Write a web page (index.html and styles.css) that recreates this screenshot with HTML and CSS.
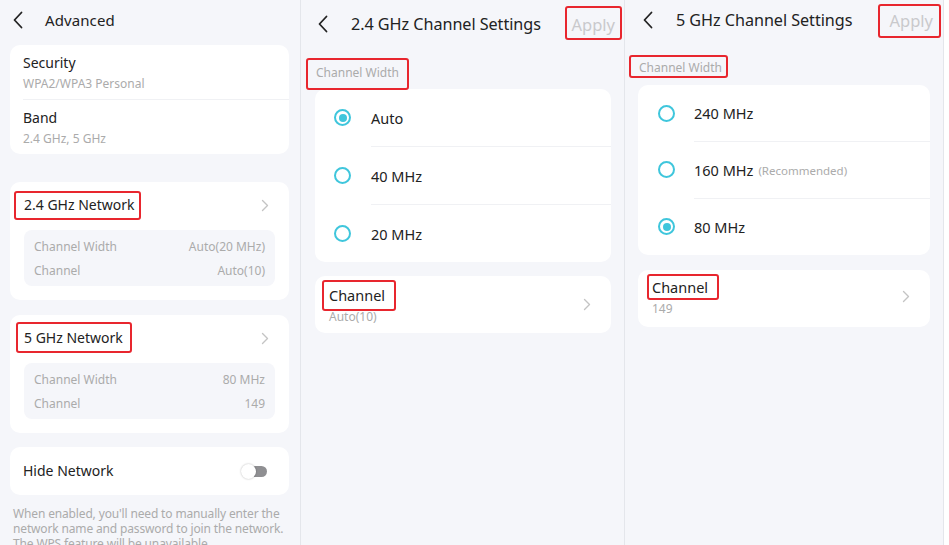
FILE: index.html
```html
<!DOCTYPE html>
<html lang="en">
<head>
    <meta charset="UTF-8">
    <meta name="viewport" content="width=device-width, initial-scale=1.0">
    <title>Channel Settings</title>
    <link rel="stylesheet" href="styles.css">
</head>
<body>
    <div class="screens">
        <!-- Advanced -->
        <div class="panel panel-advanced">
            <div class="nav">
                <svg class="back" width="12" height="18" viewBox="0 0 12 18"><path d="M9.5 1.5 L2.5 9 L9.5 16.5" fill="none" stroke="#222" stroke-width="1.8" stroke-linecap="round" stroke-linejoin="round"/></svg>
                <span class="nav-title">Advanced</span>
            </div>

            <div class="card">
                <div class="info-row">
                    <div class="row-title">Security</div>
                    <div class="row-sub">WPA2/WPA3 Personal</div>
                </div>
                <div class="info-row">
                    <div class="row-title">Band</div>
                    <div class="row-sub">2.4 GHz, 5 GHz</div>
                </div>
            </div>

            <div class="card net-card first-net">
                <div class="net-head">
                    <span class="row-title mark mark-net24">2.4 GHz Network</span>
                    <svg class="chev" width="8" height="13" viewBox="0 0 8 13"><path d="M1.5 1.5 L6.5 6.5 L1.5 11.5" fill="none" stroke="#c4c4c4" stroke-width="1.4" stroke-linecap="round" stroke-linejoin="round"/></svg>
                </div>
                <div class="net-box">
                    <div class="net-line"><span>Channel Width</span><span>Auto(20 MHz)</span></div>
                    <div class="net-line"><span>Channel</span><span>Auto(10)</span></div>
                </div>
            </div>

            <div class="card net-card">
                <div class="net-head">
                    <span class="row-title mark mark-net5">5 GHz Network</span>
                    <svg class="chev" width="8" height="13" viewBox="0 0 8 13"><path d="M1.5 1.5 L6.5 6.5 L1.5 11.5" fill="none" stroke="#c4c4c4" stroke-width="1.4" stroke-linecap="round" stroke-linejoin="round"/></svg>
                </div>
                <div class="net-box">
                    <div class="net-line"><span>Channel Width</span><span>80 MHz</span></div>
                    <div class="net-line"><span>Channel</span><span>149</span></div>
                </div>
            </div>

            <div class="card toggle-card">
                <span class="row-title">Hide Network</span>
                <span class="toggle"><span class="knob"></span></span>
            </div>

            <p class="hint">When enabled, you'll need to manually enter the<br>network name and password to join the network.<br>The WPS feature will be unavailable.</p>
        </div>

        <!-- 2.4 GHz -->
        <div class="panel panel-24">
            <div class="nav">
                <svg class="back" width="12" height="18" viewBox="0 0 12 18"><path d="M9.5 1.5 L2.5 9 L9.5 16.5" fill="none" stroke="#222" stroke-width="1.8" stroke-linecap="round" stroke-linejoin="round"/></svg>
                <span class="nav-title big">2.4 GHz Channel Settings</span>
                <span class="apply mark mark-apply">Apply</span>
            </div>
            <div class="section-label"><span class="mark mark-label">Channel Width</span></div>
            <div class="card radio-card">
                <div class="radio-row"><span class="radio checked"></span><span class="radio-text">Auto</span></div>
                <div class="radio-row"><span class="radio"></span><span class="radio-text">40 MHz</span></div>
                <div class="radio-row"><span class="radio"></span><span class="radio-text">20 MHz</span></div>
            </div>
            <div class="card channel-card">
                <div>
                    <div class="row-title"><span class="mark mark-channel">Channel</span></div>
                    <div class="channel-sub">Auto(10)</div>
                </div>
                <svg class="chev" width="8" height="13" viewBox="0 0 8 13"><path d="M1.5 1.5 L6.5 6.5 L1.5 11.5" fill="none" stroke="#c4c4c4" stroke-width="1.4" stroke-linecap="round" stroke-linejoin="round"/></svg>
            </div>
        </div>

        <!-- 5 GHz -->
        <div class="panel panel-5">
            <div class="nav">
                <svg class="back" width="12" height="18" viewBox="0 0 12 18"><path d="M9.5 1.5 L2.5 9 L9.5 16.5" fill="none" stroke="#222" stroke-width="1.8" stroke-linecap="round" stroke-linejoin="round"/></svg>
                <span class="nav-title big">5 GHz Channel Settings</span>
                <span class="apply mark mark-apply5">Apply</span>
            </div>
            <div class="section-label"><span class="mark mark-label5">Channel Width</span></div>
            <div class="card radio-card">
                <div class="radio-row"><span class="radio"></span><span class="radio-text">240 MHz</span></div>
                <div class="radio-row"><span class="radio"></span><span class="radio-text">160 MHz <small>(Recommended)</small></span></div>
                <div class="radio-row"><span class="radio checked"></span><span class="radio-text">80 MHz</span></div>
            </div>
            <div class="card channel-card">
                <div>
                    <div class="row-title"><span class="mark mark-channel5">Channel</span></div>
                    <div class="channel-sub">149</div>
                </div>
                <svg class="chev" width="8" height="13" viewBox="0 0 8 13"><path d="M1.5 1.5 L6.5 6.5 L1.5 11.5" fill="none" stroke="#c4c4c4" stroke-width="1.4" stroke-linecap="round" stroke-linejoin="round"/></svg>
            </div>
        </div>
        <div class="edge"></div>
    </div>
</body>
</html>
```

FILE: styles.css
```css
body {
    margin: 0;
    font-family: "Noto Sans", "Open Sans", sans-serif;
    color: #222;
    background: #fff;
}

.screens {
    display: flex;
    height: 545px;
    overflow: hidden;
}

.panel {
    background: #f5f6fa;
    border-right: 1px solid #e4e6eb;
    box-sizing: border-box;
    display: flex;
    flex-direction: column;
    overflow: hidden;
}

.panel-advanced {
    width: 301px;
    padding: 0 11px 0 10px;
}

.panel-24 {
    width: 324px;
    padding: 4px 13px 0 14px;
}

.panel-5 {
    width: 319px;
    padding: 0 13px 0 13px;
}

.edge {
    flex: 1;
    background: #fff;
}

/* Header */
.nav {
    height: 40px;
    display: flex;
    align-items: center;
    flex-shrink: 0;
}

.panel-advanced .back {
    margin-left: 2px;
    margin-right: 21px;
}

.panel-24 .back {
    margin-left: 2px;
    margin-right: 22px;
}

.panel-5 .back {
    margin-left: 4px;
    margin-right: 22px;
}

.nav-title {
    font-size: 15px;
    letter-spacing: 0.1px;
}

.nav-title.big {
    font-size: 16.2px;
    letter-spacing: -0.05px;
}

.apply {
    margin-left: auto;
    font-size: 16.5px;
    color: #c9c9cc;
}

.panel-24 .apply {
    margin-right: -4px;
}

.panel-5 .apply {
    margin-right: -3px;
}

/* Cards */
.card {
    background: #fff;
    border-radius: 10px;
    flex-shrink: 0;
}

.panel-advanced .card:nth-child(2) {
    margin-top: 5px;
}

.info-row {
    padding: 8px 13px;
    height: 38px;
}

.info-row + .info-row {
    border-top: 1px solid #f0f1f4;
    margin-left: 13px;
    padding-left: 0;
    height: 38px;
}

.row-title {
    font-size: 14px;
    line-height: 20px;
}

.row-sub {
    font-size: 12px;
    line-height: 18px;
    color: #ababab;
    margin-top: 2px;
}

.net-card {
    margin-top: 15px;
    padding: 13px 14px 14px;
}

.first-net {
    margin-top: 28px;
}

.net-head {
    display: flex;
    align-items: center;
    justify-content: space-between;
    height: 20px;
}

.net-head .chev {
    margin-right: 6px;
}

.net-box {
    margin-top: 15px;
    background: #f5f6fa;
    border-radius: 8px;
    padding: 5px 10px 3px;
}

.net-line {
    display: flex;
    justify-content: space-between;
    font-size: 12px;
    line-height: 24px;
    color: #ababab;
}

.toggle-card {
    margin-top: 14px;
    height: 48px;
    padding: 0 13px;
    display: flex;
    align-items: center;
    justify-content: space-between;
}

.toggle {
    width: 24px;
    height: 11px;
    border-radius: 6px;
    background: #8f8f92;
    position: relative;
    margin-right: 9px;
}

.knob {
    position: absolute;
    left: -2px;
    top: -2px;
    width: 15px;
    height: 15px;
    border-radius: 50%;
    background: #fff;
    box-shadow: 0 0 2px rgba(0, 0, 0, 0.3);
}

.hint {
    margin: 11px 0 0 3px;
    font-size: 12px;
    line-height: 15px;
    letter-spacing: -0.15px;
    color: #ababab;
    white-space: nowrap;
}

/* Channel width list */
.section-label {
    margin: 19px 0 8px 1px;
    font-size: 12px;
    line-height: 18px;
    color: #ababab;
}

.panel-24 .section-label {
    margin-top: 20px;
    margin-bottom: 7px;
}

.radio-row {
    height: 58px;
    display: flex;
    align-items: center;
}

.radio-row + .radio-row .radio-text {
    border-top: 1px solid #f0f1f4;
}

.radio {
    width: 13px;
    height: 13px;
    border: 2px solid #3fc6dc;
    border-radius: 50%;
    margin: 0 20px 0 19px;
    flex-shrink: 0;
    position: relative;
}

.radio.checked::after {
    content: "";
    position: absolute;
    left: 2.5px;
    top: 2.5px;
    width: 8px;
    height: 8px;
    border-radius: 50%;
    background: #3fc6dc;
}

.radio-text {
    flex: 1;
    align-self: stretch;
    display: flex;
    align-items: center;
    font-size: 14.5px;
    gap: 5px;
}

.radio-text small {
    font-size: 11.5px;
    color: #ababab;
}

.panel-24 .radio-row:first-child {
    height: 57px;
}

.panel-5 .radio-row {
    height: 57px;
}

.panel-5 .radio-row:first-child {
    height: 56px;
}

.panel-5 .radio {
    margin: 0 19px 0 20px;
}

.channel-card {
    margin-top: 14px;
    height: 57px;
    padding: 9px 14px 0;
    box-sizing: border-box;
    display: flex;
    justify-content: space-between;
    align-items: flex-start;
}

.channel-card .row-title {
    font-size: 14.5px;
}

.channel-card .chev {
    margin-top: 13px;
    margin-right: 6px;
}

.channel-sub {
    font-size: 12px;
    line-height: 18px;
    color: #ababab;
    margin-top: 3px;
}

.panel-5 .channel-card {
    margin-top: 15px;
    padding-top: 7px;
}

/* Red annotation boxes */
.mark {
    position: relative;
}

.mark::after {
    content: "";
    position: absolute;
    border: 2px solid #e8262e;
    border-radius: 3px;
}

.mark-net24::after {
    inset: -4px -6px -5px -10px;
}

.mark-net5::after {
    inset: -6px -9px -5px -8px;
}

.mark-apply::after {
    inset: -7px -7px -4px -6px;
}

.mark-apply5::after {
    inset: -5px -8px -6px -11px;
}

.mark-label::after {
    inset: -6px -10px -9px -10px;
}

.mark-label5::after {
    inset: -4px -6px -2px -10px;
}

.mark-channel::after {
    inset: -5px -11px -6px -7px;
}

.mark-channel5::after {
    inset: -3px -11px -3px -5px;
}
```
